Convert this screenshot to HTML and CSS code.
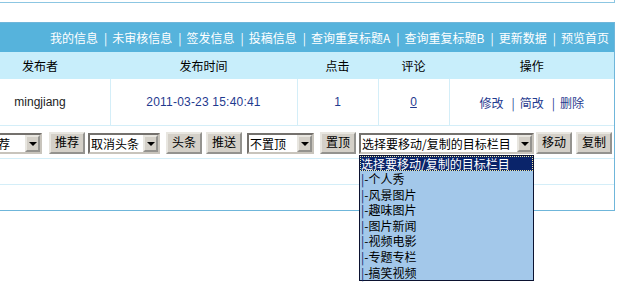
FILE: index.html
```html
<!DOCTYPE html>
<html lang="zh-CN">

<head>
    <meta charset="UTF-8">
    <title>信息管理</title>
    <link rel="stylesheet" href="styles.css">
</head>

<body>

    <div class="page">
        <div class="topbox"></div>

        <div class="panel">
            <div class="navbar"><a href="#">我的信息</a><span class="sep">|</span><a href="#">未审核信息</a><span class="sep">|</span><a href="#">签发信息</a><span class="sep">|</span><a href="#">投稿信息</a><span class="sep">|</span><a href="#">查询重复标题A</a><span class="sep">|</span><a href="#">查询重复标题B</a><span class="sep">|</span><a href="#">更新数据</a><span class="sep">|</span><a href="#">预览首页</a></div>

            <table class="list">
                <colgroup>
                    <col class="c-title">
                    <col class="c-user">
                    <col class="c-time">
                    <col class="c-hits">
                    <col class="c-comm">
                    <col class="c-op">
                </colgroup>
                <tr class="head">
                    <th></th>
                    <th>发布者</th>
                    <th>发布时间</th>
                    <th>点击</th>
                    <th>评论</th>
                    <th>操作</th>
                </tr>
                <tr class="row">
                    <td></td>
                    <td class="user">mingjiang</td>
                    <td class="time">2011-03-23 15:40:41</td>
                    <td class="num">1</td>
                    <td class="num"><a href="#" class="under">0</a></td>
                    <td class="ops"><a href="#">修改</a><span class="sep">|</span><a href="#">简改</a><span class="sep">|</span><a href="#">删除</a></td>
                </tr>
                <tr class="tools">
                    <td colspan="6">
                        <div class="toolbar">
                            <div class="sel sel-rec"><span class="sel-text">取消推荐</span><span class="sel-btn"></span></div>
                            <button class="btn">推荐</button>
                            <div class="sel sel-head"><span class="sel-text">取消头条</span><span class="sel-btn"></span></div>
                            <button class="btn">头条</button>
                            <button class="btn">推送</button>
                            <div class="sel sel-top"><span class="sel-text">不置顶</span><span class="sel-btn"></span></div>
                            <button class="btn">置顶</button>
                            <div class="sel sel-move">
                                <span class="sel-text">选择要移动/复制的目标栏目</span><span class="sel-btn"></span>
                                <ul class="dropdown">
                                    <li class="active">选择要移动/复制的目标栏目</li>
                                    <li><span class="bar">|</span>-个人秀</li>
                                    <li><span class="bar">|</span>-风景图片</li>
                                    <li><span class="bar">|</span>-趣味图片</li>
                                    <li><span class="bar">|</span>-图片新闻</li>
                                    <li><span class="bar">|</span>-视频电影</li>
                                    <li><span class="bar">|</span>-专题专栏</li>
                                    <li><span class="bar">|</span>-搞笑视频</li>
                                </ul>
                            </div>
                            <button class="btn">移动</button>
                            <button class="btn">复制</button>
                        </div>
                    </td>
                </tr>
                <tr class="blank">
                    <td colspan="6"></td>
                </tr>
                <tr class="blank">
                    <td colspan="6"></td>
                </tr>
            </table>
        </div>
    </div>

</body>

</html>
```

FILE: styles.css
```css
/* General Styles */
body {
    margin: 0;
    min-height: 100vh;
    background-color: #ffffff;
    font-family: "Liberation Sans", "Noto Sans CJK SC", sans-serif;
    font-size: 12px;
    color: #000000;
}

a {
    color: #1f3a8f;
    text-decoration: none;
}

/* page is scrolled a little to the right */
.page {
    margin-left: -61px;
    width: 676px;
}

.topbox {
    height: 2px;
    border-right: 1px solid #8cc6e2;
    border-bottom: 1px solid #8cc6e2;
    margin-bottom: 19px;
}

.panel {
    border: 1px solid #6fb6da;
}

/* top blue menu */
.navbar {
    height: 29px;
    line-height: 29px;
    background-color: #56b3dc;
    text-align: right;
    padding-right: 5px;
    white-space: nowrap;
    font-family: "Noto Sans CJK SC", sans-serif;
}

.navbar a {
    color: #ffffff;
}

.navbar .sep {
    color: #ffffff;
    margin: 0 5px 0 6px;
}

/* list table */
.list {
    width: 674px;
    border-collapse: collapse;
    border-style: hidden;
    table-layout: fixed;
}

.c-title { width: 30px; }
.c-user { width: 140px; }
.c-time { width: 187px; }
.c-hits { width: 81px; }
.c-comm { width: 71px; }

.list th,
.list td {
    border: 1px solid #d4eef8;
    padding: 0;
    text-align: center;
}

.head th {
    height: 26px;
    background-color: #c8eefb;
    border-color: #c8eefb;
    font-weight: normal;
    font-family: "Noto Sans CJK SC", sans-serif;
}

.row td {
    height: 46px;
}

.user {
    color: #222222;
}

.time {
    letter-spacing: 0.2px;
}

.time,
.num {
    color: #1f3a8f;
}

.under {
    text-decoration: underline;
}

.ops {
    font-family: "Noto Sans CJK SC", sans-serif;
}

.ops .sep {
    color: #1f3a8f;
    margin: 0 5px 0 8px;
}

.tools td {
    height: 32px;
    text-align: left;
}

.blank td {
    height: 25px;
}

/* toolbar with selects and buttons */
.toolbar {
    display: flex;
    align-items: center;
    gap: 4px;
    padding: 2px 0 0 19px;
    font-family: "Noto Sans CJK SC", sans-serif;
}

.btn {
    height: 22px;
    width: 36px;
    padding: 0 0 2px;
    background-color: #d4d0c8;
    border: 2px outset #e8e6e0;
    font-family: "Noto Sans CJK SC", sans-serif;
    font-size: 12px;
    color: #000000;
    line-height: 16px;
}

.sel {
    position: relative;
    display: flex;
    align-items: stretch;
    height: 21px;
    box-sizing: border-box;
    border: 2px inset #c8c4bc;
    background-color: #ffffff;
}

.sel-text {
    flex: 1;
    padding-left: 1px;
    line-height: 17px;
    white-space: nowrap;
    overflow: hidden;
}

.sel-btn {
    position: relative;
    width: 15px;
    box-sizing: border-box;
    background-color: #d4d0c8;
    border: 2px outset #e8e6e0;
}

.sel-btn::after {
    content: "";
    position: absolute;
    left: 2px;
    top: 5px;
    border-left: 4px solid transparent;
    border-right: 4px solid transparent;
    border-top: 4px solid #000000;
}

.sel-rec { width: 83px; margin-right: 3px; }
.sel-head { width: 72px; margin-left: -1px; margin-right: 2px; }
.sel-top { width: 67px; margin-left: 1px; margin-right: 2px; }
.sel-move { width: 175px; margin-left: -1px; margin-right: -2px; }

/* open list of the move select */
.dropdown {
    position: absolute;
    top: calc(100% + 3px);
    left: -2px;
    width: 175px;
    box-sizing: border-box;
    margin: 0;
    padding: 0;
    list-style: none;
    border: 1px solid #0b1230;
    background-color: #a3c8ea;
    z-index: 2;
}

.dropdown li {
    height: 15.6px;
    line-height: 16px;
    padding-left: 1px;
    white-space: nowrap;
}

.dropdown li.active {
    background-color: #0a246a;
    color: #ffffff;
    outline: 1px dotted #f0e8a0;
    outline-offset: -1px;
}

.dropdown .bar {
    color: #0a246a;
}
```
